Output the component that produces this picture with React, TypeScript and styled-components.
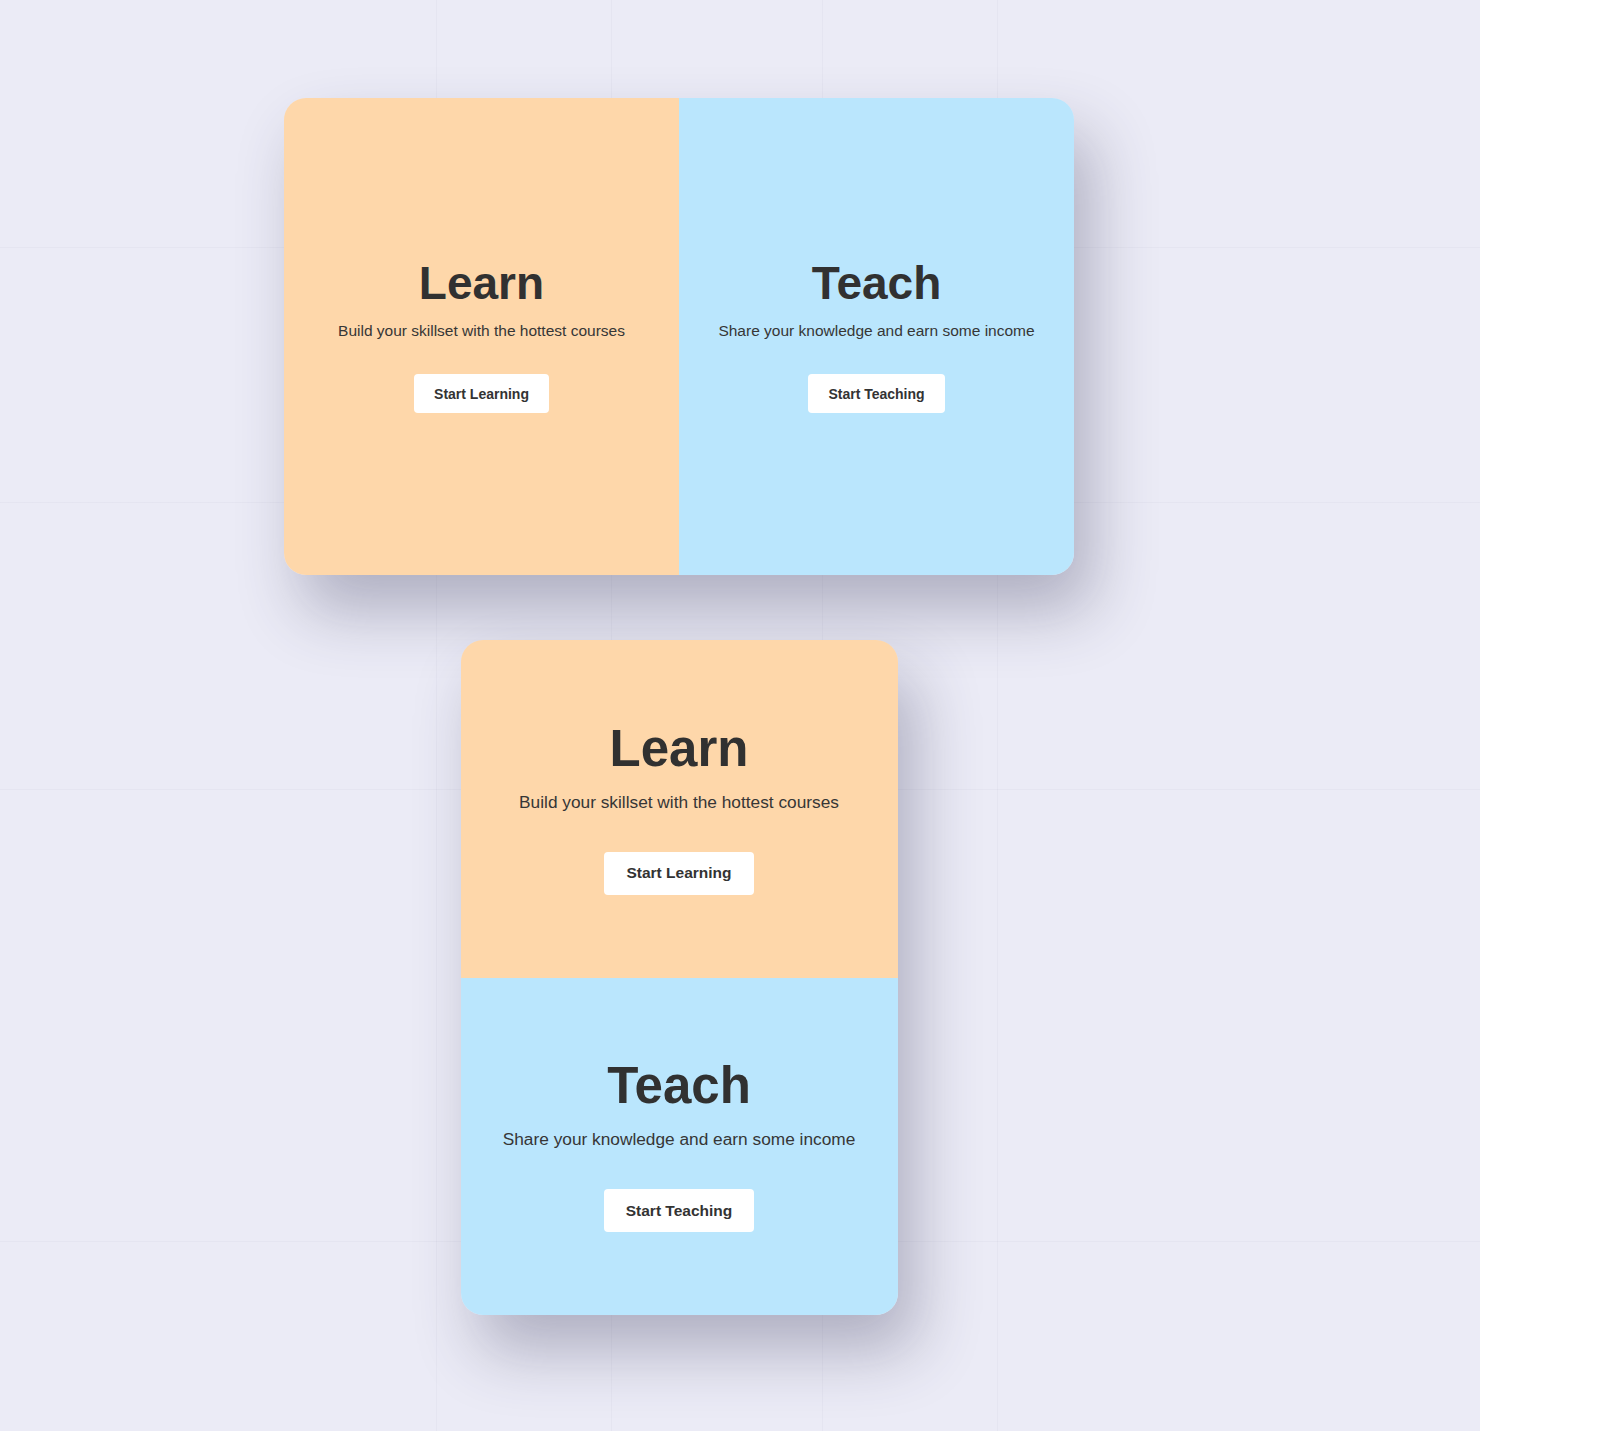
import React from 'react'
import styled, { createGlobalStyle } from 'styled-components'

const GlobalStyle = createGlobalStyle`
    html, body {
        margin: 0;
        padding: 0;
        background: #ffffff;
        font-family: "Liberation Sans", Arial, sans-serif;
    }
`

type Size = 'md' | 'lg'

const sizes = {
    md: { title: 46, titleGap: 17, text: 15.5, textGap: 36, btnFont: 14, btnHeight: 39, btnPad: 20 },
    lg: { title: 51, titleGap: 20, text: 17.3, textGap: 41, btnFont: 15.5, btnHeight: 43, btnPad: 22 },
}

// faint guide lines of the canvas, only really visible inside the shadows
const gridLine = 'linear-gradient(rgba(95, 95, 130, 0.045), rgba(95, 95, 130, 0.045))'

const Canvas = styled.div`
    width: 1480px;
    height: 1431px;
    box-sizing: border-box;
    padding-top: 98px;

    background-color: #ebebf6;
    background-image: ${gridLine}, ${gridLine}, ${gridLine}, ${gridLine},
        ${gridLine}, ${gridLine}, ${gridLine}, ${gridLine};
    background-repeat: no-repeat;
    background-size: 1px 100%, 1px 100%, 1px 100%, 1px 100%,
        100% 1px, 100% 1px, 100% 1px, 100% 1px;
    background-position: 436px 0, 611px 0, 822px 0, 997px 0,
        0 247px, 0 502px, 0 789px, 0 1241px;
`

const Stack = styled.div`
    width: 790px;
    margin-left: 284px;

    display: flex;
    flex-direction: column;
    align-items: center;
    gap: 65px;
`

const Card = styled.div<{ $stacked?: boolean }>`
    width: ${p => (p.$stacked ? '437px' : '790px')};
    height: ${p => (p.$stacked ? '675px' : '477px')};
    border-radius: 22px;
    overflow: hidden;
    box-shadow: 18px 36px 64px rgba(50, 50, 85, 0.32);

    display: flex;
    flex-direction: ${p => (p.$stacked ? 'column' : 'row')};
`

const Panel = styled.div<{ $tone: 'learn' | 'teach' }>`
    flex: 1;
    background-color: ${p => (p.$tone === 'learn' ? '#fed7aa' : '#bae6fd')};

    display: flex;
    flex-direction: column;
    justify-content: center;
    align-items: center;
    text-align: center;
    color: #333333;
`

const Title = styled.h2<{ $size: Size }>`
    margin: 0 0 ${p => sizes[p.$size].titleGap}px;
    font-size: ${p => sizes[p.$size].title}px;
    line-height: 1;
    font-weight: 700;
    color: #313131;
`

const Blurb = styled.p<{ $size: Size }>`
    margin: 0 0 ${p => sizes[p.$size].textGap}px;
    font-size: ${p => sizes[p.$size].text}px;
    line-height: 1;
    color: #363636;
`

const ActionButton = styled.button<{ $size: Size }>`
    height: ${p => sizes[p.$size].btnHeight}px;
    padding: 0 ${p => sizes[p.$size].btnPad}px;
    border: none;
    border-radius: 4px;
    background: #ffffff;

    font-family: inherit;
    font-size: ${p => sizes[p.$size].btnFont}px;
    font-weight: 700;
    color: #333333;
    cursor: pointer;
`

const sections = [
    { tone: 'learn' as const, title: 'Learn', text: 'Build your skillset with the hottest courses', action: 'Start Learning' },
    { tone: 'teach' as const, title: 'Teach', text: 'Share your knowledge and earn some income', action: 'Start Teaching' },
]

function ChoiceCard({ stacked, size }: { stacked?: boolean; size: Size }) {
    return (
        <Card $stacked={stacked}>
            {sections.map(s => (
                <Panel key={s.tone} $tone={s.tone}>
                    <Title $size={size}>{s.title}</Title>
                    <Blurb $size={size}>{s.text}</Blurb>
                    <ActionButton $size={size}>{s.action}</ActionButton>
                </Panel>
            ))}
        </Card>
    )
}

function App() {
    return (
        <>
            <GlobalStyle />
            <Canvas>
                <Stack>
                    <ChoiceCard size='md' />
                    <ChoiceCard stacked size='lg' />
                </Stack>
            </Canvas>
        </>
    )
}

export default App
